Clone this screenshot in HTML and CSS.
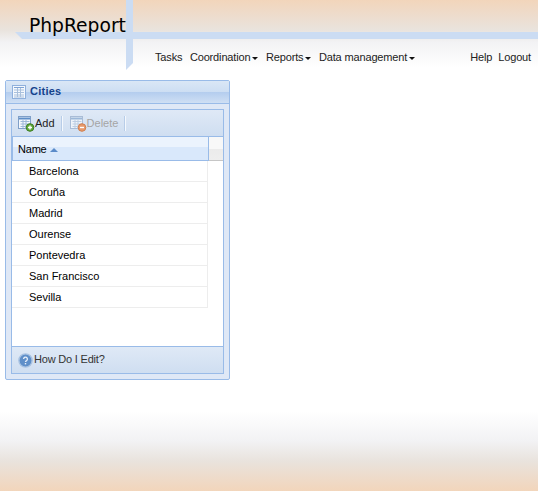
FILE: index.html
```html
<!DOCTYPE html>
<html>
<head>
    <meta charset="utf-8">
    <title>Cities - PhpReport</title>
    <link rel="stylesheet" href="styles.css">
</head>
<body>
<div class="header">
    <svg class="decor" width="538" height="70" viewBox="0 0 538 70">
        <polygon points="15,32 538,32 538,39 22,39" fill="#cbdcf3"/>
        <polygon points="126,0 133,0 133,63 126,70" fill="#cbdcf3"/>
    </svg>
    <div class="logo">PhpReport</div>
    <div class="menu">
        <div class="menu-main">
            <span>Tasks</span>
            <span class="drop">Coordination</span>
            <span class="drop">Reports</span>
            <span class="drop">Data management</span>
        </div>
        <div class="menu-user">
            <span>Help</span>
            <span>Logout</span>
        </div>
    </div>
</div>
<div class="panel">
    <div class="panel-title">
        <svg width="14" height="14" viewBox="0 0 14 14">
            <rect x="0.5" y="0.5" width="13" height="13" fill="#f4f8fd" stroke="#8fb0dc"/>
            <path d="M2 2.5h10" stroke="#7fa3d4"/>
            <path d="M2 5h10M2 7.5h10M2 10h10M2 12h10M5.5 3v9M8.5 3v9" stroke="#a9c0dc" fill="none"/>
        </svg>
        <span>Cities</span>
    </div>
    <div class="grid">
        <div class="toolbar">
            <div class="tool">
                <svg width="17" height="16" viewBox="0 0 17 16">
                    <rect x="0.5" y="0.5" width="12" height="12" fill="#f4f8fd" stroke="#7f9fc8"/>
                    <path d="M1 2.5h11" stroke="#5f8fc8" stroke-width="2"/>
                    <path d="M2.5 5.5h9M2.5 8h9M2.5 10.5h9M5 4v8M8 4v8" stroke="#9db8d8" fill="none"/>
                    <circle cx="12" cy="11.5" r="3.8" fill="#5fa83a" stroke="#3d7d22"/>
                    <path d="M10 11.5h4M12 9.5v4" stroke="#fff" stroke-width="1.4"/>
                </svg>
                <span>Add</span>
            </div>
            <div class="sep"></div>
            <div class="tool disabled">
                <svg width="17" height="16" viewBox="0 0 17 16">
                    <rect x="0.5" y="0.5" width="12" height="12" fill="#eef3f9" stroke="#a9bcd6"/>
                    <path d="M1 2.5h11" stroke="#9db8d8" stroke-width="2"/>
                    <path d="M2.5 5.5h9M2.5 8h9M2.5 10.5h9M5 4v8M8 4v8" stroke="#bccde2" fill="none"/>
                    <circle cx="12" cy="11.5" r="3.8" fill="#e89a6c" stroke="#d08050"/>
                    <path d="M10 11.5h4" stroke="#fff" stroke-width="1.4"/>
                </svg>
                <span>Delete</span>
            </div>
            <div class="sep"></div>
        </div>
        <div class="grid-head">
            <div class="col-name">
                <span>Name</span>
                <i class="sort"></i>
            </div>
            <div class="col-rest"></div>
        </div>
        <div class="rows">
            <div class="row">Barcelona</div>
            <div class="row">Coruña</div>
            <div class="row">Madrid</div>
            <div class="row">Ourense</div>
            <div class="row">Pontevedra</div>
            <div class="row">San Francisco</div>
            <div class="row">Sevilla</div>
        </div>
        <div class="grid-foot">
            <svg width="15" height="15" viewBox="0 0 15 15">
                <circle cx="7.5" cy="7.5" r="6.6" fill="#5f8fc9" stroke="#a8c2e2" stroke-width="1.4"/>
                <path d="M5.6 6a1.9 1.9 0 1 1 2.9 1.6c-.7.4-1 .8-1 1.5" fill="none" stroke="#e8f0fa" stroke-width="1.3"/>
                <rect x="6.8" y="10" width="1.4" height="1.4" fill="#e8f0fa"/>
            </svg>
            <span>How Do I Edit?</span>
        </div>
    </div>
</div>
</body>
</html>
```

FILE: styles.css
```css
html, body {
    margin: 0;
    padding: 0;
    height: 100%;
}
body {
    font-family: "Liberation Sans", Arial, sans-serif;
    font-size: 11px;
    color: #222222;
    background-color: #ffffff;
    background-image:
        linear-gradient(to bottom, #f2d5bb 0, #e9e3dd 30px, #f2f2f4 42px, #ffffff 68px),
        linear-gradient(to top, #f2d5bb 0, #e9e3dd 30px, #f2f2f4 50px, #ffffff 80px);
    background-repeat: no-repeat;
    background-size: 100% 68px, 100% 80px;
    background-position: top left, bottom left;
}
.header {
    position: relative;
    height: 80px;
    box-sizing: border-box;
    padding-top: 14px;
}
.decor {
    position: absolute;
    top: 0;
    left: 0;
}
.logo {
    position: relative;
    margin-left: 29px;
    height: 23px;
    line-height: 23px;
    font-family: "DejaVu Sans", sans-serif;
    font-size: 18.7px;
    color: #000000;
}
.menu {
    position: relative;
    display: flex;
    justify-content: space-between;
    margin: 14px 7px 0 155px;
    line-height: 13px;
    letter-spacing: -0.15px;
}
.menu-main {
    display: flex;
    gap: 7.5px;
}
.menu-user {
    display: flex;
    gap: 6px;
}
.drop {
    display: flex;
    align-items: center;
    gap: 2px;
}
.drop::after {
    content: "";
    margin-top: 2px;
    border-top: 3px solid #111111;
    border-left: 3px solid transparent;
    border-right: 3px solid transparent;
}
.panel {
    width: 225px;
    height: 300px;
    margin-left: 5px;
    box-sizing: border-box;
    border: 1px solid #99bbe8;
    border-radius: 2px;
    background: #dfe8f6;
}
.panel-title {
    display: flex;
    align-items: center;
    gap: 4px;
    height: 22px;
    padding-left: 6px;
    border-bottom: 1px solid #99bbe8;
    background: linear-gradient(to bottom, #dae7f6 0, #cddef3 50%, #b4cdee 51%, #cfdff4 100%);
    font-weight: bold;
    color: #15428b;
    letter-spacing: 0.25px;
}
.panel-title span {
    margin-bottom: 2px;
}
.grid {
    display: flex;
    flex-direction: column;
    width: 213px;
    height: 265px;
    margin: 5px 0 0 5px;
    box-sizing: border-box;
    border: 1px solid #99bbe8;
    background: #ffffff;
}
.toolbar {
    display: flex;
    align-items: center;
    height: 26px;
    padding-left: 6px;
    border-bottom: 1px solid #99bbe8;
    background: linear-gradient(to bottom, #dfe9f6, #cfdef1);
}
.tool {
    display: flex;
    align-items: center;
}
.tool svg {
    margin-top: 2px;
}
.disabled {
    color: #a5a5a5;
}
.sep {
    width: 1px;
    height: 15px;
    margin: 0 7px 0 6px;
    background: #f4f8fd;
    border-left: 1px solid #b8cde8;
}
.grid-head {
    display: flex;
    height: 24px;
    box-sizing: border-box;
    border-bottom: 1px solid #c6c6c6;
    background: linear-gradient(to bottom, #f8f8f8 0, #f8f8f8 50%, #ebebeb 51%, #eeeeee 100%);
}
.col-name {
    display: flex;
    align-items: center;
    gap: 3px;
    width: 197px;
    height: 24px;
    box-sizing: border-box;
    padding-left: 5px;
    padding-top: 1px;
    border: 1px solid #99bbe8;
    border-top: 0;
    background: linear-gradient(to bottom, #ebf3fd 0, #ebf3fd 42%, #d9e8fb 43%, #d9e8fb 100%);
    color: #000000;
    letter-spacing: -0.2px;
}
.sort {
    margin-top: 2px;
    border-bottom: 4px solid #5b8bc9;
    border-left: 4px solid transparent;
    border-right: 4px solid transparent;
}
.rows {
    flex: 1;
}
.row {
    width: 196px;
    height: 21px;
    box-sizing: border-box;
    padding-left: 17px;
    line-height: 20px;
    border-bottom: 1px solid #ededed;
    border-right: 1px solid #ededed;
    color: #000000;
}
.grid-foot {
    display: flex;
    align-items: center;
    gap: 1px;
    height: 27px;
    box-sizing: border-box;
    padding-left: 6px;
    border-top: 1px solid #99bbe8;
    background: linear-gradient(to bottom, #dfe9f6, #cfdef1);
    color: #333333;
    letter-spacing: -0.2px;
}
.grid-foot span {
    margin-bottom: 2px;
}
```
